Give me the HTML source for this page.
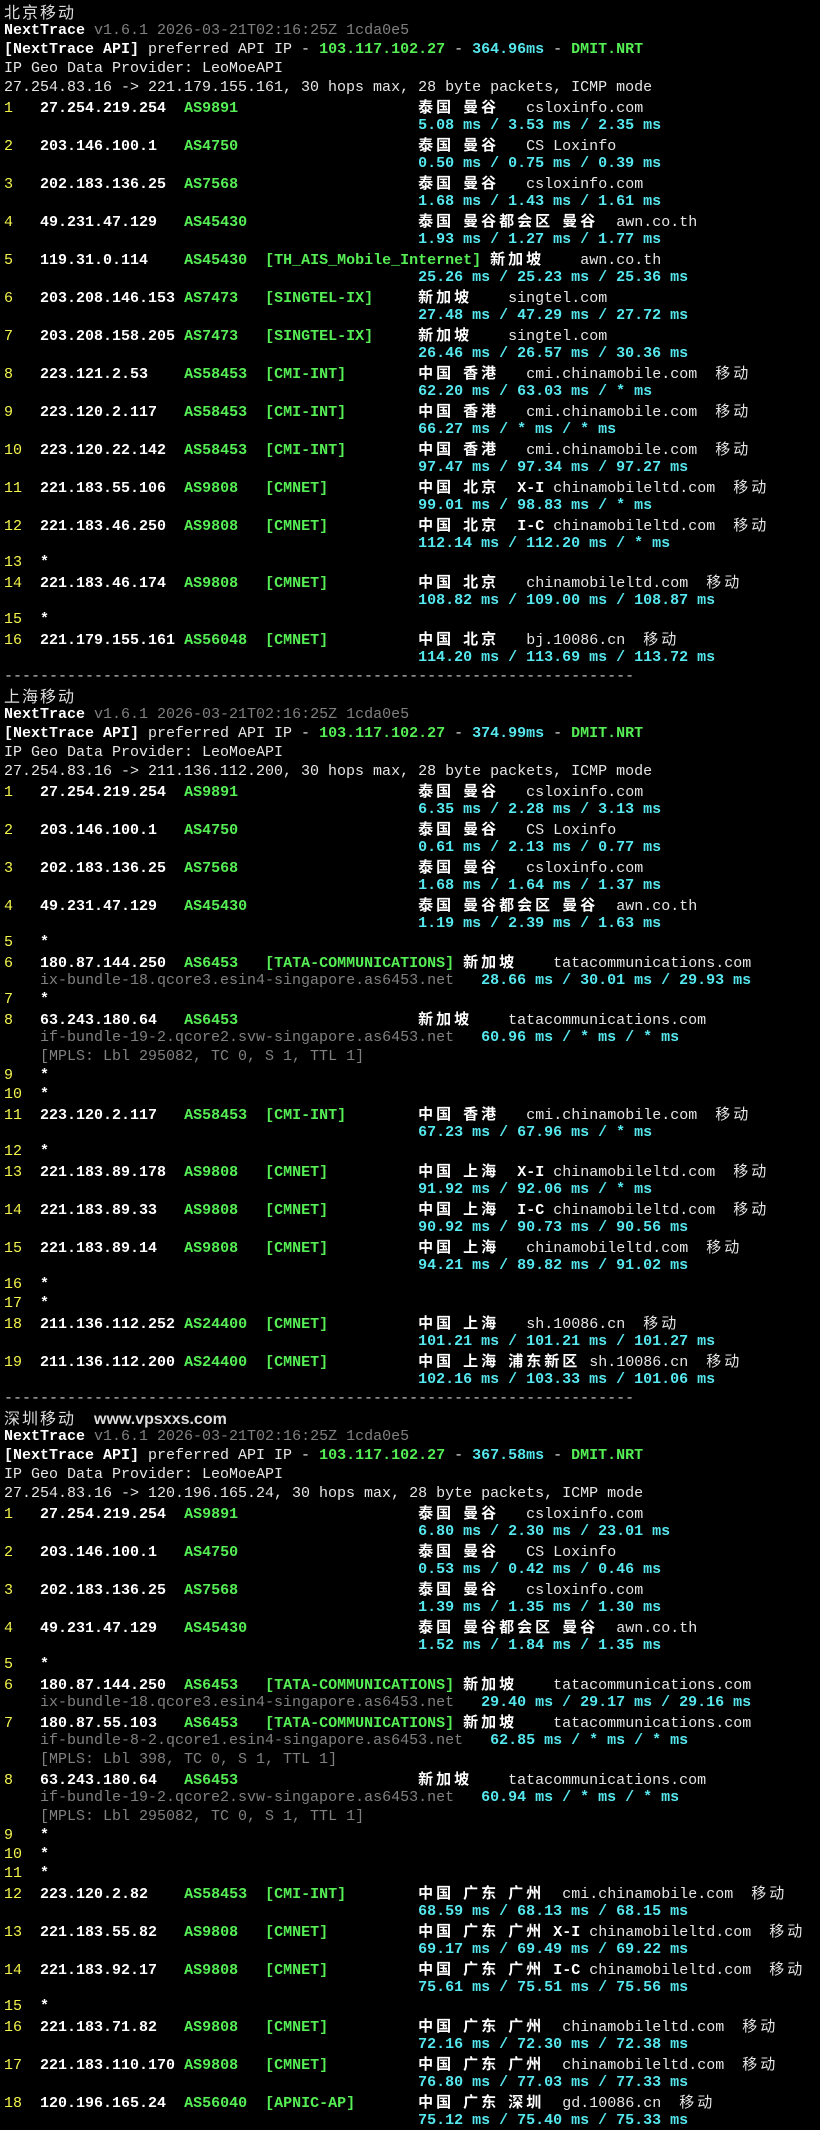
<!DOCTYPE html>
<html><head><meta charset="utf-8">
<style>
html,body{margin:0;padding:0;background:#000;}
body{width:820px;height:2108px;overflow:hidden;}
#t{padding:2px 0 0 4px;font-family:"Liberation Mono","Noto Sans CJK SC",monospace;font-size:15px;color:#e6e6e6;}
#t div{height:19px;line-height:19px;white-space:pre;overflow:visible;}
i{font-style:normal;letter-spacing:3px;font-family:"Noto Sans CJK SC",sans-serif;}
.y{color:#f4f44c;}
.b{color:#fff;font-weight:bold;}
.g{color:#55ee55;font-weight:bold;}
.c{color:#55e8ee;font-weight:bold;}
.d{color:#808080;}
.h{font-family:"Noto Sans CJK SC",sans-serif;font-size:16px;letter-spacing:2px;color:#ddd;}
.u{font-family:"Liberation Sans",sans-serif;font-weight:bold;font-size:16px;color:#ddd;letter-spacing:0;}
.x{color:#ccc;}
</style></head><body><div id="t">
<div><span class="h">北京移动</span></div>
<div><span class="b">NextTrace</span> <span class="d">v1.6.1 2026-03-21T02:16:25Z 1cda0e5</span></div>
<div><span class="b">[NextTrace API]</span> preferred API IP - <span class="g">103.117.102.27</span> - <span class="c">364.96ms</span> - <span class="g">DMIT.NRT</span></div>
<div>IP Geo Data Provider: LeoMoeAPI</div>
<div>27.254.83.16 -> 221.179.155.161, 30 hops max, 28 byte packets, ICMP mode</div>
<div><span class="y">1</span>   <span class="b">27.254.219.254</span>  <span class="g">AS9891</span>                    <span class="b"><i>泰国</i> <i>曼谷</i></span>   csloxinfo.com</div>
<div>                                              <span class="c">5.08 ms / 3.53 ms / 2.35 ms</span></div>
<div><span class="y">2</span>   <span class="b">203.146.100.1</span>   <span class="g">AS4750</span>                    <span class="b"><i>泰国</i> <i>曼谷</i></span>   CS Loxinfo</div>
<div>                                              <span class="c">0.50 ms / 0.75 ms / 0.39 ms</span></div>
<div><span class="y">3</span>   <span class="b">202.183.136.25</span>  <span class="g">AS7568</span>                    <span class="b"><i>泰国</i> <i>曼谷</i></span>   csloxinfo.com</div>
<div>                                              <span class="c">1.68 ms / 1.43 ms / 1.61 ms</span></div>
<div><span class="y">4</span>   <span class="b">49.231.47.129</span>   <span class="g">AS45430</span>                   <span class="b"><i>泰国</i> <i>曼谷都会区</i> <i>曼谷</i></span>  awn.co.th</div>
<div>                                              <span class="c">1.93 ms / 1.27 ms / 1.77 ms</span></div>
<div><span class="y">5</span>   <span class="b">119.31.0.114</span>    <span class="g">AS45430</span>  <span class="g">[TH_AIS_Mobile_Internet]</span> <span class="b"><i>新加坡</i></span>    awn.co.th</div>
<div>                                              <span class="c">25.26 ms / 25.23 ms / 25.36 ms</span></div>
<div><span class="y">6</span>   <span class="b">203.208.146.153</span> <span class="g">AS7473</span>   <span class="g">[SINGTEL-IX]</span>     <span class="b"><i>新加坡</i></span>    singtel.com</div>
<div>                                              <span class="c">27.48 ms / 47.29 ms / 27.72 ms</span></div>
<div><span class="y">7</span>   <span class="b">203.208.158.205</span> <span class="g">AS7473</span>   <span class="g">[SINGTEL-IX]</span>     <span class="b"><i>新加坡</i></span>    singtel.com</div>
<div>                                              <span class="c">26.46 ms / 26.57 ms / 30.36 ms</span></div>
<div><span class="y">8</span>   <span class="b">223.121.2.53</span>    <span class="g">AS58453</span>  <span class="g">[CMI-INT]</span>        <span class="b"><i>中国</i> <i>香港</i></span>   cmi.chinamobile.com  <i>移动</i></div>
<div>                                              <span class="c">62.20 ms / 63.03 ms / * ms</span></div>
<div><span class="y">9</span>   <span class="b">223.120.2.117</span>   <span class="g">AS58453</span>  <span class="g">[CMI-INT]</span>        <span class="b"><i>中国</i> <i>香港</i></span>   cmi.chinamobile.com  <i>移动</i></div>
<div>                                              <span class="c">66.27 ms / * ms / * ms</span></div>
<div><span class="y">10</span>  <span class="b">223.120.22.142</span>  <span class="g">AS58453</span>  <span class="g">[CMI-INT]</span>        <span class="b"><i>中国</i> <i>香港</i></span>   cmi.chinamobile.com  <i>移动</i></div>
<div>                                              <span class="c">97.47 ms / 97.34 ms / 97.27 ms</span></div>
<div><span class="y">11</span>  <span class="b">221.183.55.106</span>  <span class="g">AS9808</span>   <span class="g">[CMNET]</span>          <span class="b"><i>中国</i> <i>北京</i>  X-I</span> chinamobileltd.com  <i>移动</i></div>
<div>                                              <span class="c">99.01 ms / 98.83 ms / * ms</span></div>
<div><span class="y">12</span>  <span class="b">221.183.46.250</span>  <span class="g">AS9808</span>   <span class="g">[CMNET]</span>          <span class="b"><i>中国</i> <i>北京</i>  I-C</span> chinamobileltd.com  <i>移动</i></div>
<div>                                              <span class="c">112.14 ms / 112.20 ms / * ms</span></div>
<div><span class="y">13</span>  <span class="b">*</span></div>
<div><span class="y">14</span>  <span class="b">221.183.46.174</span>  <span class="g">AS9808</span>   <span class="g">[CMNET]</span>          <span class="b"><i>中国</i> <i>北京</i></span>   chinamobileltd.com  <i>移动</i></div>
<div>                                              <span class="c">108.82 ms / 109.00 ms / 108.87 ms</span></div>
<div><span class="y">15</span>  <span class="b">*</span></div>
<div><span class="y">16</span>  <span class="b">221.179.155.161</span> <span class="g">AS56048</span>  <span class="g">[CMNET]</span>          <span class="b"><i>中国</i> <i>北京</i></span>   bj.10086.cn  <i>移动</i></div>
<div>                                              <span class="c">114.20 ms / 113.69 ms / 113.72 ms</span></div>
<div class="x">----------------------------------------------------------------------</div>
<div><span class="h">上海移动</span></div>
<div><span class="b">NextTrace</span> <span class="d">v1.6.1 2026-03-21T02:16:25Z 1cda0e5</span></div>
<div><span class="b">[NextTrace API]</span> preferred API IP - <span class="g">103.117.102.27</span> - <span class="c">374.99ms</span> - <span class="g">DMIT.NRT</span></div>
<div>IP Geo Data Provider: LeoMoeAPI</div>
<div>27.254.83.16 -> 211.136.112.200, 30 hops max, 28 byte packets, ICMP mode</div>
<div><span class="y">1</span>   <span class="b">27.254.219.254</span>  <span class="g">AS9891</span>                    <span class="b"><i>泰国</i> <i>曼谷</i></span>   csloxinfo.com</div>
<div>                                              <span class="c">6.35 ms / 2.28 ms / 3.13 ms</span></div>
<div><span class="y">2</span>   <span class="b">203.146.100.1</span>   <span class="g">AS4750</span>                    <span class="b"><i>泰国</i> <i>曼谷</i></span>   CS Loxinfo</div>
<div>                                              <span class="c">0.61 ms / 2.13 ms / 0.77 ms</span></div>
<div><span class="y">3</span>   <span class="b">202.183.136.25</span>  <span class="g">AS7568</span>                    <span class="b"><i>泰国</i> <i>曼谷</i></span>   csloxinfo.com</div>
<div>                                              <span class="c">1.68 ms / 1.64 ms / 1.37 ms</span></div>
<div><span class="y">4</span>   <span class="b">49.231.47.129</span>   <span class="g">AS45430</span>                   <span class="b"><i>泰国</i> <i>曼谷都会区</i> <i>曼谷</i></span>  awn.co.th</div>
<div>                                              <span class="c">1.19 ms / 2.39 ms / 1.63 ms</span></div>
<div><span class="y">5</span>   <span class="b">*</span></div>
<div><span class="y">6</span>   <span class="b">180.87.144.250</span>  <span class="g">AS6453</span>   <span class="g">[TATA-COMMUNICATIONS]</span> <span class="b"><i>新加坡</i></span>    tatacommunications.com</div>
<div>    <span class="d">ix-bundle-18.qcore3.esin4-singapore.as6453.net</span>   <span class="c">28.66 ms / 30.01 ms / 29.93 ms</span></div>
<div><span class="y">7</span>   <span class="b">*</span></div>
<div><span class="y">8</span>   <span class="b">63.243.180.64</span>   <span class="g">AS6453</span>                    <span class="b"><i>新加坡</i></span>    tatacommunications.com</div>
<div>    <span class="d">if-bundle-19-2.qcore2.svw-singapore.as6453.net</span>   <span class="c">60.96 ms / * ms / * ms</span></div>
<div>    <span class="d">[MPLS: Lbl 295082, TC 0, S 1, TTL 1]</span></div>
<div><span class="y">9</span>   <span class="b">*</span></div>
<div><span class="y">10</span>  <span class="b">*</span></div>
<div><span class="y">11</span>  <span class="b">223.120.2.117</span>   <span class="g">AS58453</span>  <span class="g">[CMI-INT]</span>        <span class="b"><i>中国</i> <i>香港</i></span>   cmi.chinamobile.com  <i>移动</i></div>
<div>                                              <span class="c">67.23 ms / 67.96 ms / * ms</span></div>
<div><span class="y">12</span>  <span class="b">*</span></div>
<div><span class="y">13</span>  <span class="b">221.183.89.178</span>  <span class="g">AS9808</span>   <span class="g">[CMNET]</span>          <span class="b"><i>中国</i> <i>上海</i>  X-I</span> chinamobileltd.com  <i>移动</i></div>
<div>                                              <span class="c">91.92 ms / 92.06 ms / * ms</span></div>
<div><span class="y">14</span>  <span class="b">221.183.89.33</span>   <span class="g">AS9808</span>   <span class="g">[CMNET]</span>          <span class="b"><i>中国</i> <i>上海</i>  I-C</span> chinamobileltd.com  <i>移动</i></div>
<div>                                              <span class="c">90.92 ms / 90.73 ms / 90.56 ms</span></div>
<div><span class="y">15</span>  <span class="b">221.183.89.14</span>   <span class="g">AS9808</span>   <span class="g">[CMNET]</span>          <span class="b"><i>中国</i> <i>上海</i></span>   chinamobileltd.com  <i>移动</i></div>
<div>                                              <span class="c">94.21 ms / 89.82 ms / 91.02 ms</span></div>
<div><span class="y">16</span>  <span class="b">*</span></div>
<div><span class="y">17</span>  <span class="b">*</span></div>
<div><span class="y">18</span>  <span class="b">211.136.112.252</span> <span class="g">AS24400</span>  <span class="g">[CMNET]</span>          <span class="b"><i>中国</i> <i>上海</i></span>   sh.10086.cn  <i>移动</i></div>
<div>                                              <span class="c">101.21 ms / 101.21 ms / 101.27 ms</span></div>
<div><span class="y">19</span>  <span class="b">211.136.112.200</span> <span class="g">AS24400</span>  <span class="g">[CMNET]</span>          <span class="b"><i>中国</i> <i>上海</i> <i>浦东新区</i></span> sh.10086.cn  <i>移动</i></div>
<div>                                              <span class="c">102.16 ms / 103.33 ms / 101.06 ms</span></div>
<div class="x">----------------------------------------------------------------------</div>
<div><span class="h">深圳移动</span>  <span class="u">www.vpsxxs.com</span></div>
<div><span class="b">NextTrace</span> <span class="d">v1.6.1 2026-03-21T02:16:25Z 1cda0e5</span></div>
<div><span class="b">[NextTrace API]</span> preferred API IP - <span class="g">103.117.102.27</span> - <span class="c">367.58ms</span> - <span class="g">DMIT.NRT</span></div>
<div>IP Geo Data Provider: LeoMoeAPI</div>
<div>27.254.83.16 -> 120.196.165.24, 30 hops max, 28 byte packets, ICMP mode</div>
<div><span class="y">1</span>   <span class="b">27.254.219.254</span>  <span class="g">AS9891</span>                    <span class="b"><i>泰国</i> <i>曼谷</i></span>   csloxinfo.com</div>
<div>                                              <span class="c">6.80 ms / 2.30 ms / 23.01 ms</span></div>
<div><span class="y">2</span>   <span class="b">203.146.100.1</span>   <span class="g">AS4750</span>                    <span class="b"><i>泰国</i> <i>曼谷</i></span>   CS Loxinfo</div>
<div>                                              <span class="c">0.53 ms / 0.42 ms / 0.46 ms</span></div>
<div><span class="y">3</span>   <span class="b">202.183.136.25</span>  <span class="g">AS7568</span>                    <span class="b"><i>泰国</i> <i>曼谷</i></span>   csloxinfo.com</div>
<div>                                              <span class="c">1.39 ms / 1.35 ms / 1.30 ms</span></div>
<div><span class="y">4</span>   <span class="b">49.231.47.129</span>   <span class="g">AS45430</span>                   <span class="b"><i>泰国</i> <i>曼谷都会区</i> <i>曼谷</i></span>  awn.co.th</div>
<div>                                              <span class="c">1.52 ms / 1.84 ms / 1.35 ms</span></div>
<div><span class="y">5</span>   <span class="b">*</span></div>
<div><span class="y">6</span>   <span class="b">180.87.144.250</span>  <span class="g">AS6453</span>   <span class="g">[TATA-COMMUNICATIONS]</span> <span class="b"><i>新加坡</i></span>    tatacommunications.com</div>
<div>    <span class="d">ix-bundle-18.qcore3.esin4-singapore.as6453.net</span>   <span class="c">29.40 ms / 29.17 ms / 29.16 ms</span></div>
<div><span class="y">7</span>   <span class="b">180.87.55.103</span>   <span class="g">AS6453</span>   <span class="g">[TATA-COMMUNICATIONS]</span> <span class="b"><i>新加坡</i></span>    tatacommunications.com</div>
<div>    <span class="d">if-bundle-8-2.qcore1.esin4-singapore.as6453.net</span>   <span class="c">62.85 ms / * ms / * ms</span></div>
<div>    <span class="d">[MPLS: Lbl 398, TC 0, S 1, TTL 1]</span></div>
<div><span class="y">8</span>   <span class="b">63.243.180.64</span>   <span class="g">AS6453</span>                    <span class="b"><i>新加坡</i></span>    tatacommunications.com</div>
<div>    <span class="d">if-bundle-19-2.qcore2.svw-singapore.as6453.net</span>   <span class="c">60.94 ms / * ms / * ms</span></div>
<div>    <span class="d">[MPLS: Lbl 295082, TC 0, S 1, TTL 1]</span></div>
<div><span class="y">9</span>   <span class="b">*</span></div>
<div><span class="y">10</span>  <span class="b">*</span></div>
<div><span class="y">11</span>  <span class="b">*</span></div>
<div><span class="y">12</span>  <span class="b">223.120.2.82</span>    <span class="g">AS58453</span>  <span class="g">[CMI-INT]</span>        <span class="b"><i>中国</i> <i>广东</i> <i>广州</i></span>  cmi.chinamobile.com  <i>移动</i></div>
<div>                                              <span class="c">68.59 ms / 68.13 ms / 68.15 ms</span></div>
<div><span class="y">13</span>  <span class="b">221.183.55.82</span>   <span class="g">AS9808</span>   <span class="g">[CMNET]</span>          <span class="b"><i>中国</i> <i>广东</i> <i>广州</i> X-I</span> chinamobileltd.com  <i>移动</i></div>
<div>                                              <span class="c">69.17 ms / 69.49 ms / 69.22 ms</span></div>
<div><span class="y">14</span>  <span class="b">221.183.92.17</span>   <span class="g">AS9808</span>   <span class="g">[CMNET]</span>          <span class="b"><i>中国</i> <i>广东</i> <i>广州</i> I-C</span> chinamobileltd.com  <i>移动</i></div>
<div>                                              <span class="c">75.61 ms / 75.51 ms / 75.56 ms</span></div>
<div><span class="y">15</span>  <span class="b">*</span></div>
<div><span class="y">16</span>  <span class="b">221.183.71.82</span>   <span class="g">AS9808</span>   <span class="g">[CMNET]</span>          <span class="b"><i>中国</i> <i>广东</i> <i>广州</i></span>  chinamobileltd.com  <i>移动</i></div>
<div>                                              <span class="c">72.16 ms / 72.30 ms / 72.38 ms</span></div>
<div><span class="y">17</span>  <span class="b">221.183.110.170</span> <span class="g">AS9808</span>   <span class="g">[CMNET]</span>          <span class="b"><i>中国</i> <i>广东</i> <i>广州</i></span>  chinamobileltd.com  <i>移动</i></div>
<div>                                              <span class="c">76.80 ms / 77.03 ms / 77.33 ms</span></div>
<div><span class="y">18</span>  <span class="b">120.196.165.24</span>  <span class="g">AS56040</span>  <span class="g">[APNIC-AP]</span>       <span class="b"><i>中国</i> <i>广东</i> <i>深圳</i></span>  gd.10086.cn  <i>移动</i></div>
<div>                                              <span class="c">75.12 ms / 75.40 ms / 75.33 ms</span></div>
</div></body></html>
